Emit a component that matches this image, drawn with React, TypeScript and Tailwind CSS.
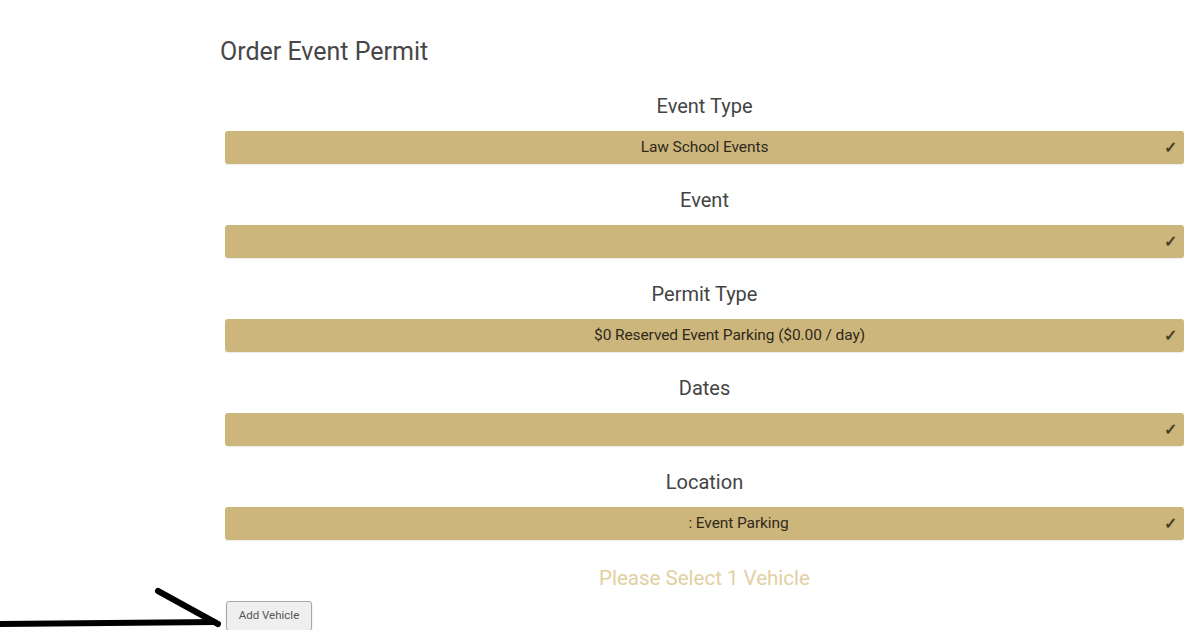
import React from "react";

const rows = [
  { label: "Event Type", value: "Law School Events", pad: "" },
  { label: "Event", value: "", pad: "" },
  { label: "Permit Type", value: "$0 Reserved Event Parking ($0.00 / day)", pad: "pl-[50px]" },
  { label: "Dates", value: "", pad: "" },
  { label: "Location", value: ": Event Parking", pad: "pl-[68px]" },
];

export default function App() {
  return (
    <div
      className="relative w-[1200px] h-[630px] overflow-hidden bg-white"
      style={{ fontFamily: "Roboto, 'Liberation Sans', sans-serif" }}
    >
      <div className="ml-[220px] w-[964px] pt-[36px] flex flex-col">
        <h1 className="text-[25px] leading-[32px] text-[#474747]">Order Event Permit</h1>
        <div className="mt-[24px] ml-[5px] flex flex-col gap-[22px]">
          {rows.map((r) => (
            <div key={r.label} className="flex flex-col gap-[11px]">
              <div className="text-center text-[20px] leading-[28px] text-[#444]">{r.label}</div>
              <div className="relative h-[33px] rounded-[3px] bg-[#cdb67c] shadow-[0_1px_1px_rgba(0,0,0,0.08)] flex items-center justify-center">
                <span className={`${r.pad} text-[15.5px] tracking-[-0.1px] text-[#2f291b]`}>{r.value}</span>
                <span className="absolute right-[7px] top-1/2 -translate-y-1/2 text-[16px] font-bold text-[#4a4028]">✓</span>
              </div>
            </div>
          ))}
        </div>
        <div className="mt-[24px] ml-[5px] text-center text-[20.5px] leading-[28px] text-[#e2cfa2]">
          Please Select 1 Vehicle
        </div>
        <div className="mt-[9px] ml-[6px]">
          <button className="h-[30px] w-[86px] rounded-[3px] border border-[#a8a8a8] bg-[#efefef] text-[11.5px] text-[#555] shadow-[0_1px_2px_rgba(0,0,0,0.15)]">
            Add Vehicle
          </button>
        </div>
      </div>
      <svg className="absolute left-0 top-[580px]" width="230" height="50" viewBox="0 0 230 50">
        <line x1="0" y1="44" x2="216" y2="42" stroke="#000" strokeWidth="6" />
        <line x1="158" y1="11" x2="218" y2="44" stroke="#000" strokeWidth="6" strokeLinecap="round" />
      </svg>
    </div>
  );
}
